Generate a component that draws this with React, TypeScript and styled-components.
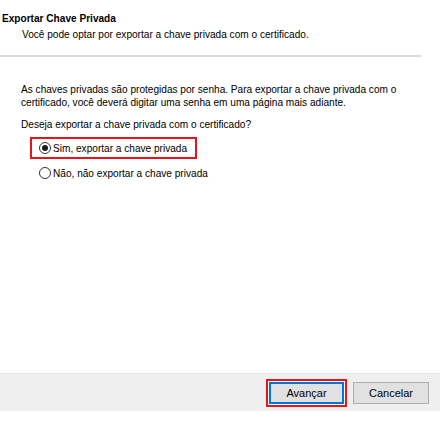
import React from "react";
import styled, { createGlobalStyle } from "styled-components";

const Global = createGlobalStyle`
  html, body { margin: 0; padding: 0; background: #ffffff; }
  body { font-family: "Liberation Sans", Arial, sans-serif; font-size: 10.1px; color: #000; }
`;

const Dialog = styled.div`
  width: 440px;
  height: 424px;
  display: flex;
  flex-direction: column;
`;

const Header = styled.div`
  padding: 12px 0 0 2px;
  height: 42px;
  box-sizing: border-box;
`;

const Title = styled.div`
  font-weight: bold;
  line-height: 13px;
`;

const Subtitle = styled.div`
  padding-left: 20px;
  margin-top: 3px;
  line-height: 13px;
`;

const Separator = styled.div`
  width: 421px;
  height: 2px;
  background: #dadada;
  margin-top: 13px;
`;

const Body = styled.div`
  flex: 1;
  padding: 26px 0 0 21px;
`;

const Para = styled.p`
  margin: 0 0 9px 0;
  line-height: 13px;
`;

const Question = styled.p`
  margin: 0 0 6px 0;
  line-height: 13px;
`;

const Options = styled.div`
  display: flex;
  flex-direction: column;
  gap: 3px;
  padding-left: 9px;
`;

const Option = styled.label<{ $highlight?: boolean }>`
  display: flex;
  align-items: center;
  gap: 2px;
  height: 22px;
  box-sizing: border-box;
  width: ${(p) => (p.$highlight ? "167px" : "auto")};
  padding-left: 7px;
  white-space: nowrap;
  border: 2px solid ${(p) => (p.$highlight ? "#e8141b" : "transparent")};
`;

const Radio = styled.span<{ $checked?: boolean }>`
  width: 12px;
  height: 12px;
  box-sizing: border-box;
  border-radius: 50%;
  border: 1px solid #333;
  background: #fff;
  position: relative;
  flex: none;
  &::after {
    content: "";
    display: ${(p) => (p.$checked ? "block" : "none")};
    position: absolute;
    left: 2px;
    top: 2px;
    width: 6px;
    height: 6px;
    border-radius: 50%;
    background: #1a1a1a;
  }
`;

const Footer = styled.div`
  height: 38px;
  box-sizing: border-box;
  background: #efefef;
  border-top: 1px solid #e3e3e3;
  display: flex;
  align-items: center;
  justify-content: flex-end;
  gap: 6px;
  padding-right: 11px;
  margin-bottom: 13px;
`;

const Focus = styled.div`
  padding: 1px;
  border: 2px solid #e8141b;
  background: #ffffff;
  display: flex;
`;

const Button = styled.button<{ $primary?: boolean }>`
  width: ${(p) => (p.$primary ? "75px" : "76px")};
  height: 22px;
  font-family: "Liberation Sans", Arial, sans-serif;
  font-size: 11px;
  color: #000;
  background: #e1e1e1;
  border: ${(p) => (p.$primary ? "2px solid #0078d7" : "1px solid #adadad")};
  padding: 0;
  box-sizing: border-box;
`;

export default function App() {
  return (
    <>
      <Global />
      <Dialog>
        <Header>
          <Title>Exportar Chave Privada</Title>
          <Subtitle>Você pode optar por exportar a chave privada com o certificado.</Subtitle>
        </Header>
        <Separator />
        <Body>
          <Para>
            As chaves privadas são protegidas por senha. Para exportar a chave privada com o
            <br />
            certificado, você deverá digitar uma senha em uma página mais adiante.
          </Para>
          <Question>Deseja exportar a chave privada com o certificado?</Question>
          <Options>
            <Option $highlight>
              <Radio $checked />
              Sim, exportar a chave privada
            </Option>
            <Option>
              <Radio />
              Não, não exportar a chave privada
            </Option>
          </Options>
        </Body>
        <Footer>
          <Focus>
            <Button $primary>Avançar</Button>
          </Focus>
          <Button>Cancelar</Button>
        </Footer>
      </Dialog>
    </>
  );
}
